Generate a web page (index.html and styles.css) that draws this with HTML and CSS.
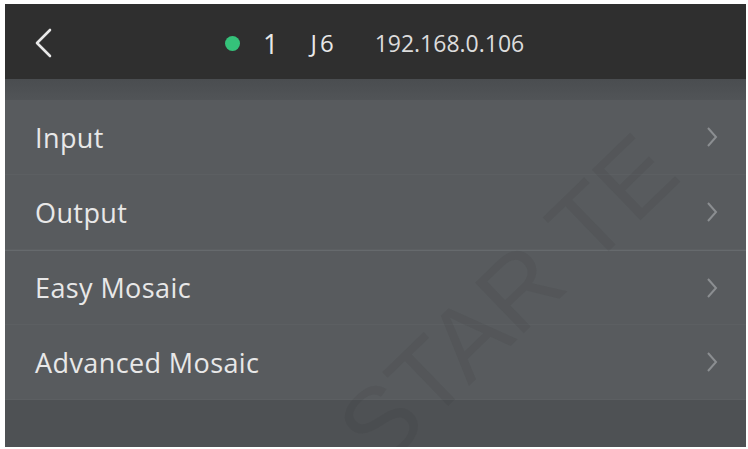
FILE: index.html
```html
<!DOCTYPE html>
<html>
<head>
<meta charset="utf-8">
<link rel="stylesheet" href="styles.css">
</head>
<body>
<div class="screen">
  <header class="topbar">
    <svg class="back" width="20" height="30" viewBox="0 0 20 30"><path d="M17 2 L4 15 L17 28" fill="none" stroke="#e8e8e8" stroke-width="2.6" stroke-linecap="round" stroke-linejoin="round"/></svg>
    <div class="status">
      <span class="dot"></span>
      <span class="num">1</span>
      <span class="model">J6</span>
      <span class="ip">192.168.0.106</span>
    </div>
  </header>
  <div class="strip"></div>
  <ul class="menu">
    <li class="row">Input<svg class="chev" width="14" height="22" viewBox="0 0 14 22"><path d="M3 2 L11 11 L3 20" fill="none" stroke="#8b8e91" stroke-width="2"/></svg></li>
    <li class="row">Output<svg class="chev" width="14" height="22" viewBox="0 0 14 22"><path d="M3 2 L11 11 L3 20" fill="none" stroke="#8b8e91" stroke-width="2"/></svg></li>
    <li class="row sep">Easy Mosaic<svg class="chev" width="14" height="22" viewBox="0 0 14 22"><path d="M3 2 L11 11 L3 20" fill="none" stroke="#8b8e91" stroke-width="2"/></svg></li>
    <li class="row">Advanced Mosaic<svg class="chev" width="14" height="22" viewBox="0 0 14 22"><path d="M3 2 L11 11 L3 20" fill="none" stroke="#8b8e91" stroke-width="2"/></svg></li>
  </ul>
  <div class="foot"></div>
  <div class="watermark">STAR TE</div>
</div>
</body>
</html>
```
FILE: styles.css
```css
html, body { margin: 0; padding: 0; background: #ffffff; }
body { padding: 4px 2px 2px 5px; width: 748px; height: 449px; box-sizing: border-box; overflow: hidden; }
.screen {
  position: relative;
  width: 741px;
  height: 443px;
  background: #4f5255;
  overflow: hidden;
  font-family: "Open Sans", "Noto Sans", sans-serif;
  color: #e8e8e8;
  display: flex;
  flex-direction: column;
}
.topbar {
  height: 75px;
  flex: none;
  background: #2f2f2f;
  display: flex;
  align-items: center;
  padding-top: 3px;
  box-sizing: border-box;
}
.back { margin-left: 28px; flex: none; }
.status {
  display: flex;
  align-items: center;
  margin-left: 172px;
}
.dot { width: 15px; height: 15px; border-radius: 50%; background: #35c27a; margin-right: 23px; }
.num { font-size: 27px; margin-right: 32px; line-height: 1; }
.model { font-size: 24px; letter-spacing: 3px; margin-right: 38px; line-height: 1; }
.ip { font-size: 23px; color: #dcdcdc; line-height: 1; }
.strip { height: 21px; flex: none; background: linear-gradient(#4a4d50, #515457); }
.menu { list-style: none; margin: 0; padding: 0; background: #585b5e; }
.row {
  height: 74px;
  display: flex;
  align-items: center;
  justify-content: space-between;
  padding: 0 27px 0 30px;
  font-size: 27px;
  letter-spacing: 0.4px;
  border-bottom: 1px solid #5c5f62;
}
.row.sep { border-top: 1px solid #666a6d; height: 73px; }
.chev { flex: none; }
.foot { flex: 1; background: #4e5154; }
.watermark {
  position: absolute;
  left: 292px;
  top: 245px;
  width: max-content;
  font-size: 102px;
  line-height: 1;
  font-family: "Liberation Sans", sans-serif;
  color: rgba(40, 40, 40, 0.09);
  transform: rotate(-44deg);
  transform-origin: center center;
  white-space: nowrap;
  pointer-events: none;
}
```
